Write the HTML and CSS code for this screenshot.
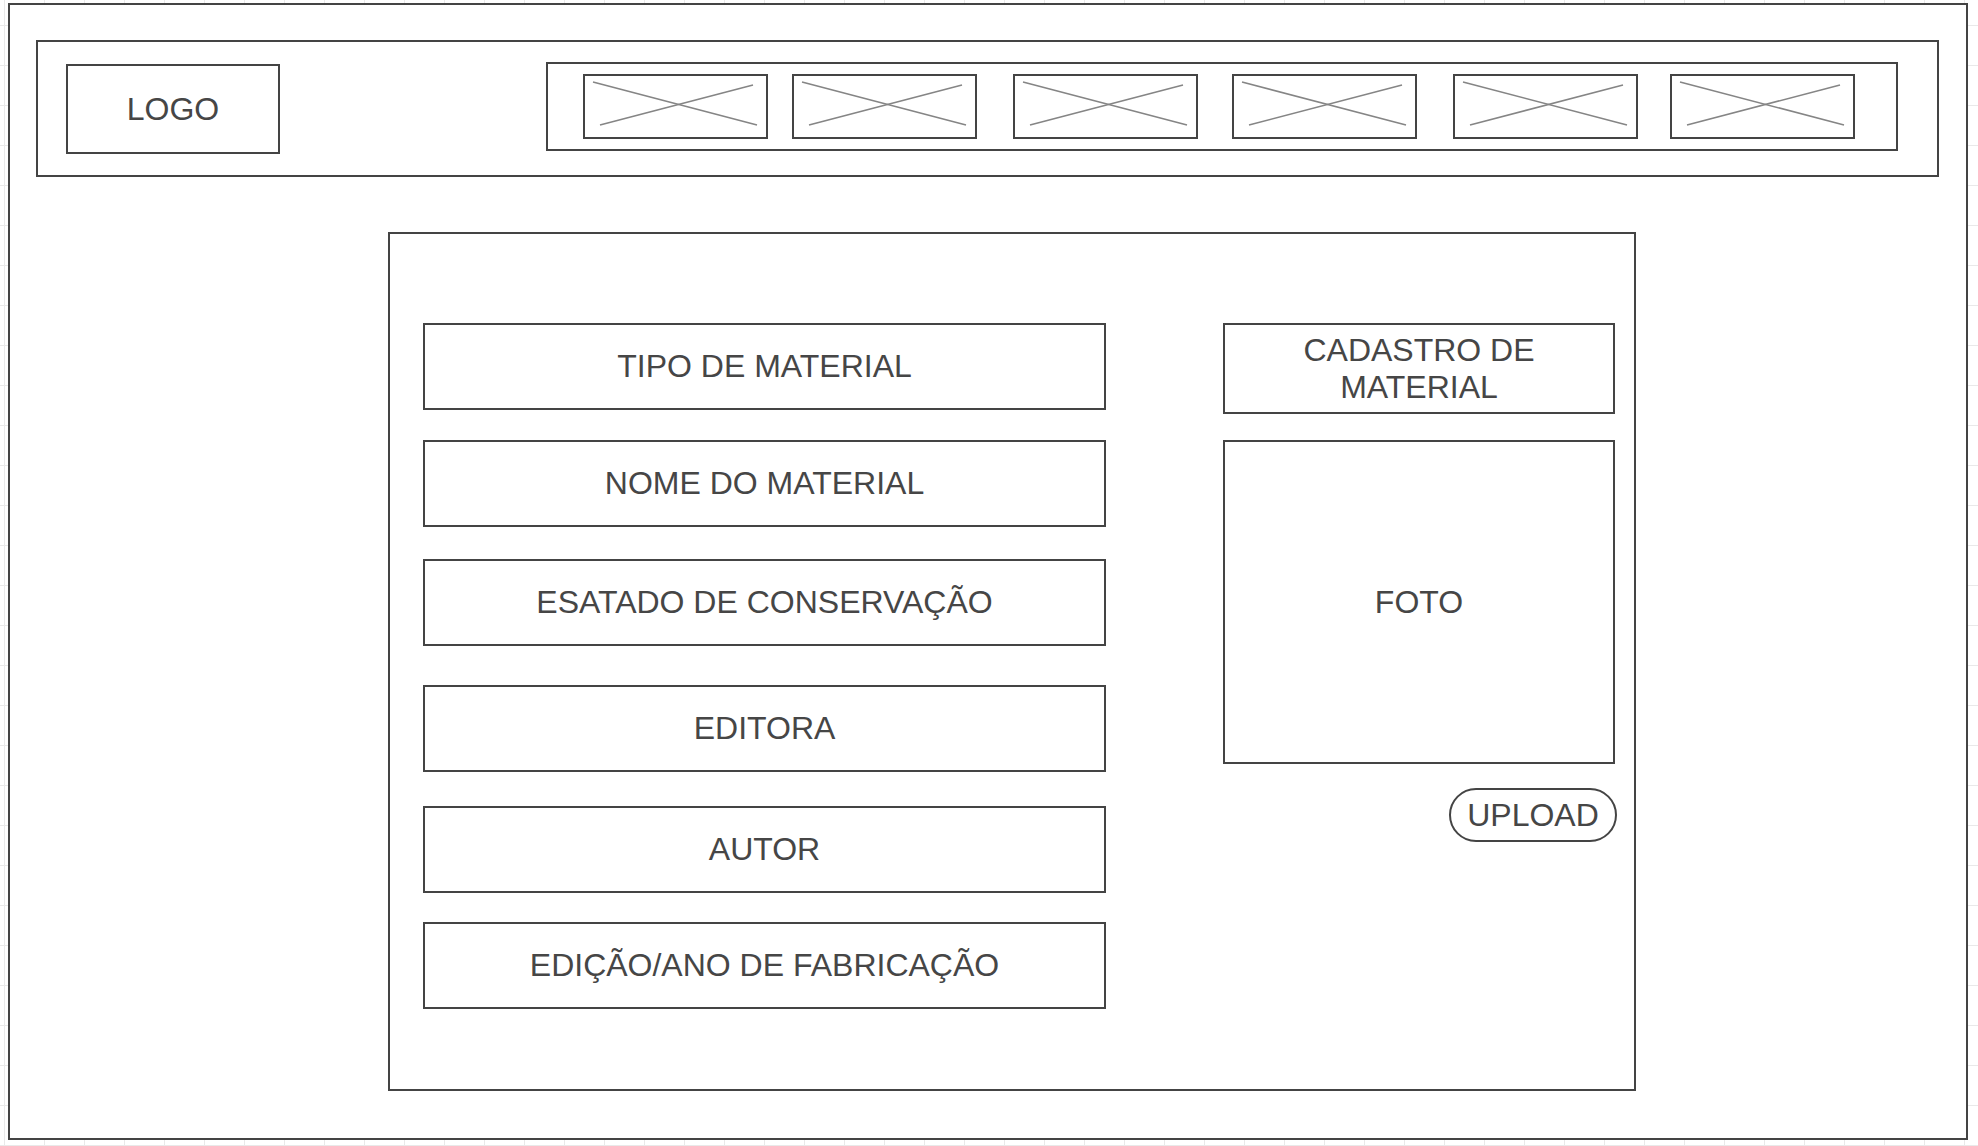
FILE: index.html
```html
<!DOCTYPE html>
<html lang="pt">
<head>
<meta charset="utf-8">
<title>Cadastro de Material</title>
<link rel="stylesheet" href="styles.css">
</head>
<body>
<div class="frame">
  <header class="topbar">
    <div class="logo">LOGO</div>
    <nav class="nav">
      <div class="nav-item"><svg viewBox="0 0 181 61"><line x1="8" y1="6" x2="172" y2="49"/><line x1="15" y1="49" x2="168" y2="9"/></svg></div>
      <div class="nav-item"><svg viewBox="0 0 181 61"><line x1="8" y1="6" x2="172" y2="49"/><line x1="15" y1="49" x2="168" y2="9"/></svg></div>
      <div class="nav-item"><svg viewBox="0 0 181 61"><line x1="8" y1="6" x2="172" y2="49"/><line x1="15" y1="49" x2="168" y2="9"/></svg></div>
      <div class="nav-item"><svg viewBox="0 0 181 61"><line x1="8" y1="6" x2="172" y2="49"/><line x1="15" y1="49" x2="168" y2="9"/></svg></div>
      <div class="nav-item"><svg viewBox="0 0 181 61"><line x1="8" y1="6" x2="172" y2="49"/><line x1="15" y1="49" x2="168" y2="9"/></svg></div>
      <div class="nav-item"><svg viewBox="0 0 181 61"><line x1="8" y1="6" x2="172" y2="49"/><line x1="15" y1="49" x2="168" y2="9"/></svg></div>
    </nav>
  </header>
  <main class="panel">
    <div class="fields">
      <div class="field">TIPO DE MATERIAL</div>
      <div class="field">NOME DO MATERIAL</div>
      <div class="field">ESATADO DE CONSERVAÇÃO</div>
      <div class="field">EDITORA</div>
      <div class="field">AUTOR</div>
      <div class="field">EDIÇÃO/ANO DE FABRICAÇÃO</div>
    </div>
    <div class="side">
      <div class="title">CADASTRO DE<br>MATERIAL</div>
      <div class="photo">FOTO</div>
      <div class="upload">UPLOAD</div>
    </div>
  </main>
</div>
</body>
</html>
```
FILE: styles.css
```css
* {
  box-sizing: border-box;
}

html, body {
  margin: 0;
  height: 1146px;
  overflow: hidden;
}

body {
  background-color: #ffffff;
  background-image:
    linear-gradient(to right, #e9e9e9 1px, transparent 1px),
    linear-gradient(to bottom, #e9e9e9 1px, transparent 1px);
  background-size: 40px 40px;
  background-position: 4px 25px;
  font-family: "Liberation Sans", Arial, sans-serif;
  font-size: 32px;
  color: #464646;
}

.frame {
  margin: 3px 0 0 8px;
  width: 1960px;
  height: 1137px;
  border: 2px solid #444444;
  background: #ffffff;
  overflow: hidden;
}

.topbar {
  margin: 35px 0 0 26px;
  width: 1903px;
  height: 137px;
  border: 2px solid #444444;
  display: flex;
  align-items: flex-start;
  padding: 20px 0 0 28px;
}

.logo {
  margin-top: 2px;
  width: 214px;
  height: 90px;
  border: 2px solid #444444;
  display: flex;
  align-items: center;
  justify-content: center;
}

.nav {
  margin-left: 266px;
  width: 1352px;
  height: 89px;
  border: 2px solid #444444;
  display: flex;
  align-items: flex-start;
  padding-top: 10px;
}

.nav-item {
  width: 185px;
  height: 65px;
  border: 2px solid #444444;
  flex: none;
}

.nav-item svg {
  display: block;
  width: 181px;
  height: 61px;
}

.nav-item line {
  stroke: #858585;
  stroke-width: 1.6;
}

.nav-item:nth-child(1) { margin-left: 35px; }
.nav-item:nth-child(2) { margin-left: 24px; }
.nav-item:nth-child(3) { margin-left: 36px; }
.nav-item:nth-child(4) { margin-left: 34px; }
.nav-item:nth-child(5) { margin-left: 36px; }
.nav-item:nth-child(6) { margin-left: 32px; }

.panel {
  margin: 55px 0 0 378px;
  width: 1248px;
  height: 859px;
  border: 2px solid #444444;
  display: flex;
  align-items: flex-start;
  padding: 89px 0 0 33px;
}

.fields {
  width: 683px;
  display: flex;
  flex-direction: column;
}

.field {
  height: 87px;
  border: 2px solid #444444;
  display: flex;
  align-items: center;
  justify-content: center;
}

.field:nth-child(2) { margin-top: 30px; }
.field:nth-child(3) { margin-top: 32px; }
.field:nth-child(4) { margin-top: 39px; }
.field:nth-child(5) { margin-top: 34px; }
.field:nth-child(6) { margin-top: 29px; }

.side {
  margin-left: 117px;
  width: 392px;
  display: flex;
  flex-direction: column;
}

.title {
  height: 91px;
  border: 2px solid #444444;
  display: flex;
  align-items: center;
  justify-content: center;
  text-align: center;
  line-height: 37px;
}

.photo {
  margin-top: 26px;
  height: 324px;
  border: 2px solid #444444;
  display: flex;
  align-items: center;
  justify-content: center;
}

.upload {
  margin-top: 24px;
  margin-right: -2px;
  align-self: flex-end;
  width: 168px;
  height: 54px;
  border: 2px solid #444444;
  border-radius: 27px;
  display: flex;
  align-items: center;
  justify-content: center;
}
```
